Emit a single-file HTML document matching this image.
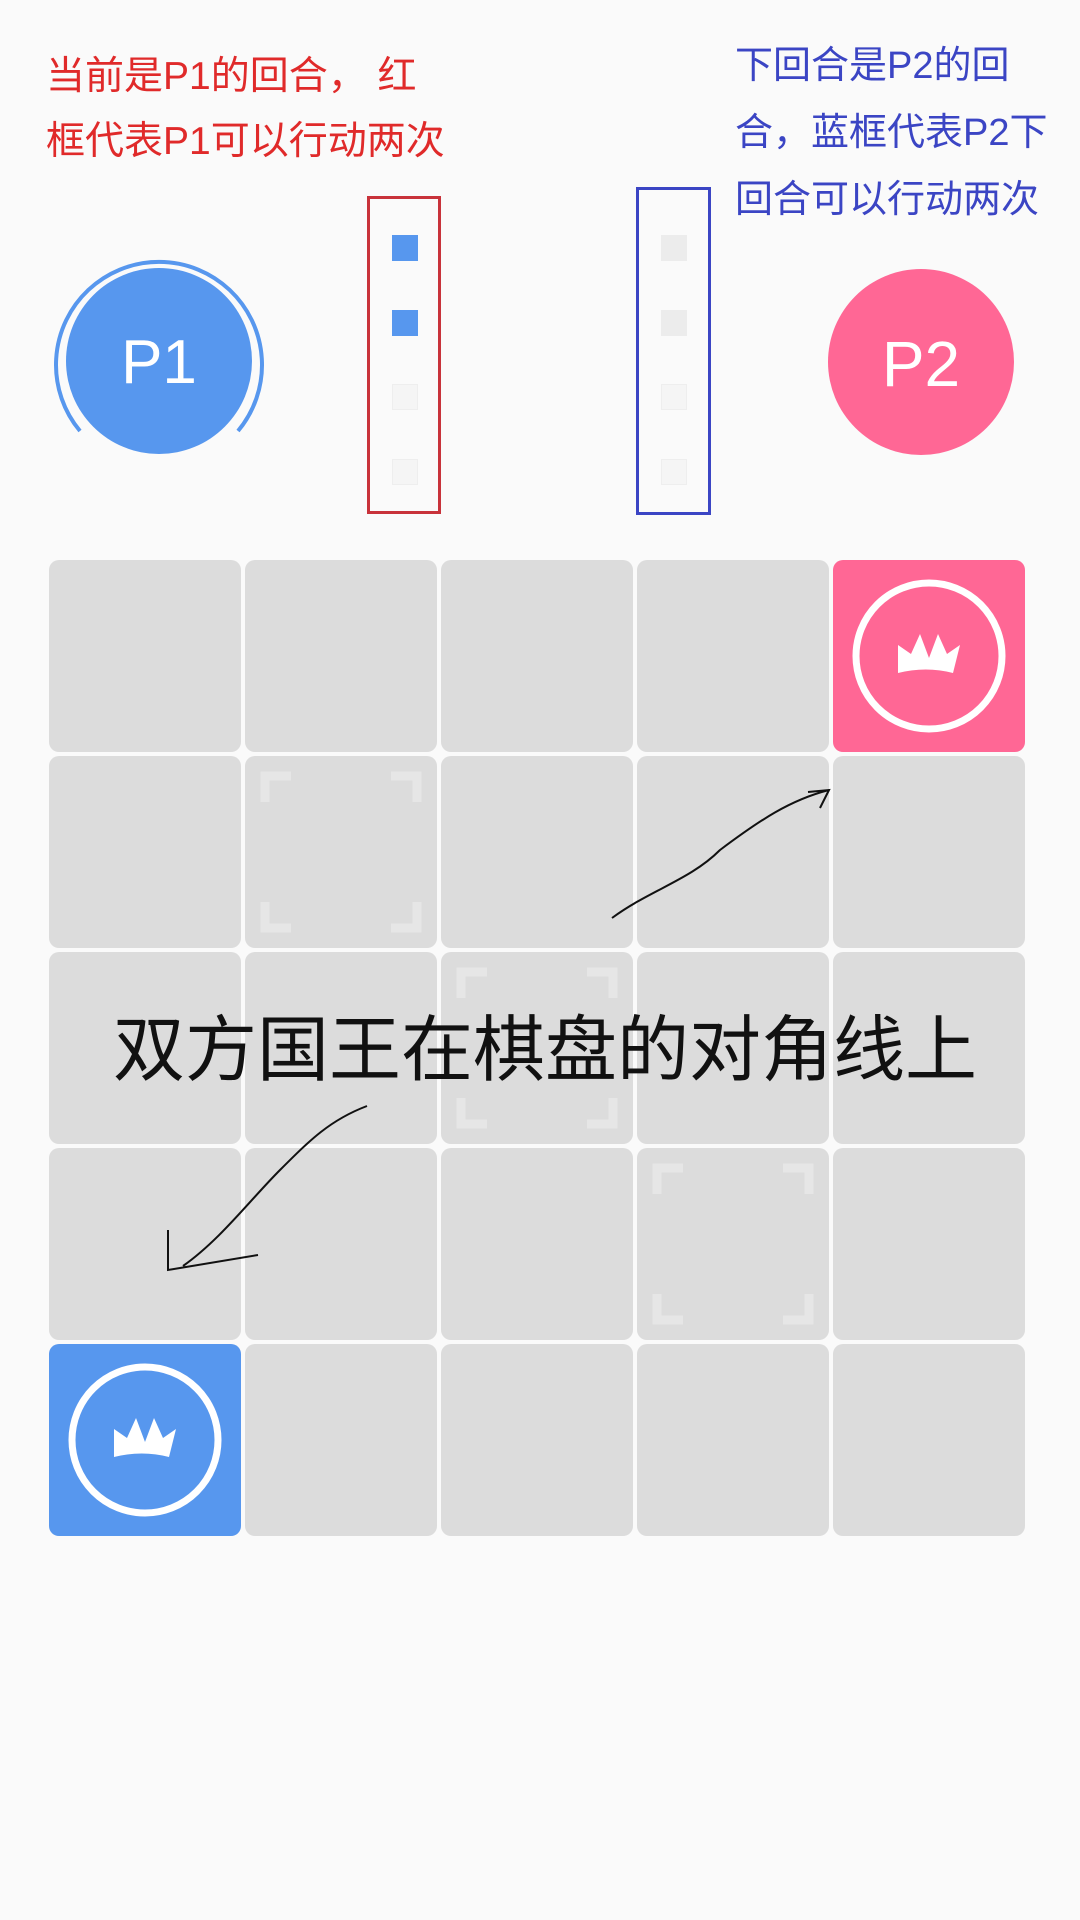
<!DOCTYPE html>
<html><head><meta charset="utf-8"><style>
body{margin:0;width:1080px;height:1920px;background:#fafafa;position:relative;overflow:hidden;font-family:"Liberation Sans","Noto Sans CJK SC",sans-serif}
.t{position:absolute;white-space:nowrap}
.box{position:absolute;box-sizing:border-box}
.sq{position:absolute;width:26px;height:26px}
.cell{position:absolute;width:192px;height:192px;background:#dcdcdc;border-radius:10px}
</style></head><body>
<div class="t" style="left:46px;top:44px;color:#e02a2a;font-size:39px;line-height:65px">当前是P1的回合， 红<br>框代表P1可以行动两次</div>
<div class="t" style="left:735px;top:33px;color:#3b45c4;font-size:38px;line-height:67px">下回合是P2的回<br>合，蓝框代表P2下<br>回合可以行动两次</div>

<svg class="box" style="left:50px;top:255px" width="220" height="220">
<circle cx="109" cy="106" r="93" fill="#5797ee"/>
<path d="M30 176 A103 103 0 1 1 188 176" fill="none" stroke="#5797ee" stroke-width="4"/>
<text x="109" y="128" text-anchor="middle" font-size="62" fill="#fff" font-family="Liberation Sans">P1</text>
</svg>
<svg class="box" style="left:820px;top:262px" width="200" height="200">
<circle cx="101" cy="100" r="93" fill="#ff6795"/>
<text x="101" y="124" text-anchor="middle" font-size="64" fill="#fff" font-family="Liberation Sans">P2</text>
</svg>

<div class="box" style="left:367px;top:196px;width:74px;height:318px;border:3px solid #c8323a"></div>
<div class="sq" style="left:392px;top:235px;background:#5797ee"></div>
<div class="sq" style="left:392px;top:310px;background:#5797ee"></div>
<div class="sq" style="left:392px;top:384px;background:#f5f5f5;border:1px solid #eee;box-sizing:border-box"></div>
<div class="sq" style="left:392px;top:459px;background:#f5f5f5;border:1px solid #eee;box-sizing:border-box"></div>
<div class="box" style="left:636px;top:187px;width:75px;height:328px;border:3px solid #3b45c4"></div>
<div class="sq" style="left:661px;top:235px;background:#ececec"></div>
<div class="sq" style="left:661px;top:310px;background:#ececec"></div>
<div class="sq" style="left:661px;top:384px;background:#f5f5f5;border:1px solid #eee;box-sizing:border-box"></div>
<div class="sq" style="left:661px;top:459px;background:#f5f5f5;border:1px solid #eee;box-sizing:border-box"></div>

<div id="g"></div>
<script>
var h='';
for(var r=0;r<5;r++)for(var c=0;c<5;c++){
 var x=49+c*196,y=560+r*196,bg='#dcdcdc';
 if(r==0&&c==4)bg='#ff6795'; if(r==4&&c==0)bg='#5797ee';
 h+='<div class="cell" style="left:'+x+'px;top:'+y+'px;background:'+bg+'"></div>';
}
document.getElementById('g').innerHTML=h;
</script>
<svg class="box" style="left:0;top:0" width="1080" height="1920" fill="none">
<g stroke="#e6e6e6" stroke-width="9">
<g transform="translate(245,756)"><path d="M20 46V20H46M146 20H172V46M20 146V172H46M146 172H172V146"/></g>
<g transform="translate(441,952)"><path d="M20 46V20H46M146 20H172V46M20 146V172H46M146 172H172V146"/></g>
<g transform="translate(637,1148)"><path d="M20 46V20H46M146 20H172V46M20 146V172H46M146 172H172V146"/></g>
</g>
<circle cx="929" cy="656" r="73" stroke="#fff" stroke-width="7"/>
<circle cx="145" cy="1440" r="73" stroke="#fff" stroke-width="7"/>
<path fill="#fff" stroke="none" d="M898 645l13 9 9-20 9 24 9-24 9 20 13-9-7 28q-27-7-55 0z"/>
<path fill="#fff" stroke="none" d="M114 1429l13 9 9-20 9 24 9-24 9 20 13-9-7 28q-27-7-55 0z"/>
<g stroke="#111" stroke-width="2">
<path d="M612 918C650 890 690 880 720 850C760 820 790 800 829 790M808 792L829 790L820 808"/>
<path d="M367 1106C330 1120 310 1140 280 1170C250 1200 220 1240 183 1266M168 1230L168 1270L258 1255"/>
</g>
</svg>
<div class="t" style="left:113px;top:1008px;font-size:72px;line-height:86px;color:#111">双方国王在棋盘的对角线上</div>
</body></html>
